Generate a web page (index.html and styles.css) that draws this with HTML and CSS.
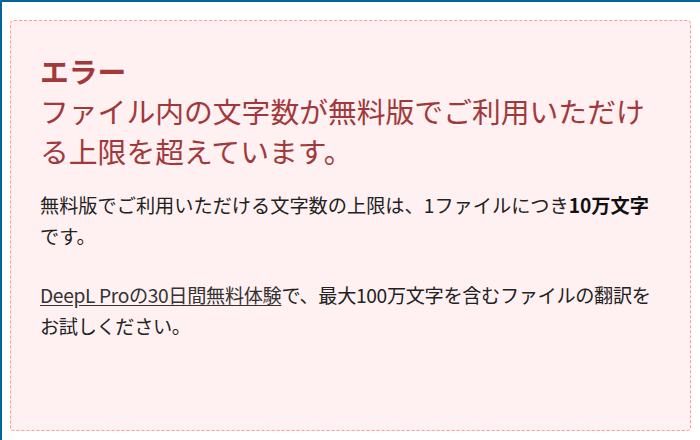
FILE: index.html
```html
<!DOCTYPE html>
<html lang="ja">
<head>
  <meta charset="UTF-8" />
  <title>エラー</title>
  <link rel="stylesheet" href="styles.css">
</head>
<body>
  <div class="error-box">
    <h2 class="error-title">
      <strong>エラー</strong><br>
      ファイル内の文字数が無料版でご利用いただける上限を超えています。
    </h2>
    <p>無料版でご利用いただける文字数の上限は、1ファイルにつき<strong>10万文字</strong>です。</p>
    <p class="trial"><a href="#">DeepL Proの30日間無料体験</a>で、最大100万文字を含むファイルの翻訳をお試しください。</p>
  </div>
</body>
</html>
```

FILE: styles.css
```css
html, body {
  margin: 0;
  height: 100%;
}

body {
  box-sizing: border-box;
  display: flex;
  flex-direction: column;
  padding: 18px 9px 9px 8px;
  border-top: 2px solid #00659b;
  border-left: 2px solid #00659b;
  background: #fff;
  font-family: "Noto Sans CJK JP", "Noto Sans", sans-serif;
  color: #222;
}

.error-box {
  flex: 1;
  padding: 30px 30px 30px 29px;
  background: #fff0f1;
  border: 1px dashed #ff9c9c;
  border-radius: 4px;
}

.error-title {
  margin: 0 0 19px 0;
  font-size: 28.8px;
  line-height: 40px;
  font-weight: normal;
  color: #a1393b;
}

.error-title strong {
  font-weight: bold;
}

.error-box p {
  margin: 0 0 28.8px 0;
  font-size: 19.2px;
  line-height: 30.7px;
}

.error-box p strong {
  font-weight: bold;
  color: #111;
}

/* latin part runs a bit wide, tighten so the line breaks like the original */
.error-box p.trial {
  letter-spacing: -0.35px;
}

.error-box a {
  color: #333;
  text-decoration: underline;
  text-underline-offset: 2px;
}
```
